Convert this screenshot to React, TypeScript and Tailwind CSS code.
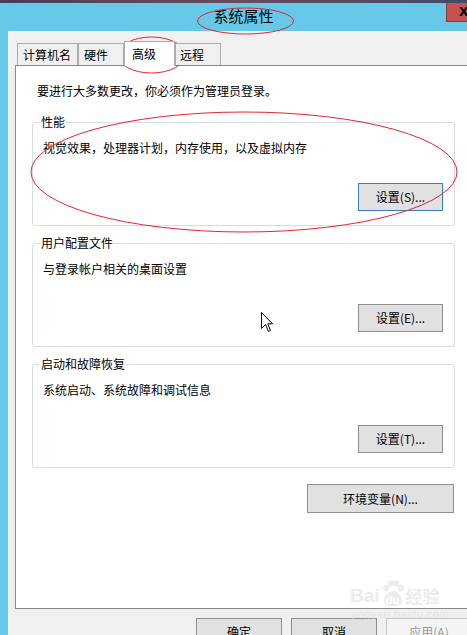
import React from "react";

const Btn: React.FC<{ label: string; focused?: boolean; disabled?: boolean; className?: string }> = ({
  label,
  focused,
  disabled,
  className = "",
}) => (
  <div
    className={`h-[28px] flex items-center justify-center text-[12px] leading-[16px] ${
      disabled
        ? "bg-[#f4f4f4] border border-[#c6c6c6] text-[#9a9a9a]"
        : focused
        ? "bg-[#e1e1e1] border border-[#3c7fb1] text-black"
        : "bg-[#e1e1e1] border border-[#8f8f8f] text-black"
    } ${className}`}
  >
    {label}
  </div>
);

const Group: React.FC<{ title: string; desc: string; button: string; focused?: boolean; className?: string }> = ({
  title,
  desc,
  button,
  focused,
  className = "",
}) => (
  <fieldset className={`ml-[16px] w-[423px] border border-[#d5dde3] rounded-[3px] pb-[14px] ${className}`}>
    <legend className="ml-[7px] px-[1px] text-[12px] leading-[14px] text-black">{title}</legend>
    <div className="mt-[11px] pl-[10px] text-[12px] leading-[16px] text-black">{desc}</div>
    <div className="mt-[27px] flex justify-end pr-[11px]">
      <Btn label={button} focused={focused} className="w-[85px]" />
    </div>
  </fieldset>
);

export default function App() {
  const tabs = [
    { label: "计算机名", w: "w-[61px]", pl: "pl-[5px]" },
    { label: "硬件", w: "w-[46px]", pl: "pl-[5px]" },
    { label: "高级", w: "w-[51px]", pl: "pl-[7px]", active: true },
    { label: "远程", w: "w-[46px]", pl: "pl-[4px]" },
  ];

  return (
    <div className="relative w-[467px] h-[635px] overflow-hidden bg-[#66c9e8] flex flex-col font-['Noto_Sans_CJK_SC','Microsoft_YaHei',sans-serif]">
      {/* desktop strip above the window */}
      <div className="h-[3px] bg-gradient-to-r from-[#4a3c5c] via-[#6b4a5e] to-[#3f4a6a] shrink-0" />

      {/* title bar */}
      <div className="relative h-[28px] shrink-0 flex items-center justify-center pl-[20px]">
        <span className="text-[15px] leading-[20px] text-black -mt-[2px]">系统属性</span>
        <div className="absolute right-0 top-0 w-[21px] h-[19px] bg-[#c75050] border-l border-b border-[#8a3d3d] pl-[12px] flex items-center">
          <span className="font-['Liberation_Sans',sans-serif] font-bold text-[17px] leading-[17px] text-black -mt-[3px]">x</span>
        </div>
      </div>

      {/* window body */}
      <div className="flex-1 flex pl-[8px]">
        <div className="flex-1 bg-[#f0f0f0] pl-[7px] pt-[10px] flex flex-col">
          {/* tabs */}
          <div className="h-[24px] flex items-end pl-[2px] relative z-10">
            {tabs.map((t) =>
              t.active ? (
                <div
                  key={t.label}
                  className={`${t.w} ${t.pl} h-[25px] -mb-[1px] bg-white border border-b-0 border-[#acacac] text-[12px] leading-[16px] pt-[4px] text-black`}
                >
                  {t.label}
                </div>
              ) : (
                <div
                  key={t.label}
                  className={`${t.w} ${t.pl} h-[22px] bg-[#f0f0f0] border border-b-0 border-[#acacac] text-[12px] leading-[16px] pt-[3px] text-black`}
                >
                  {t.label}
                </div>
              )
            )}
          </div>

          {/* tab panel */}
          <div className="h-[544px] w-[470px] shrink-0 bg-white border border-[#898989] flex flex-col">
            <div className="mt-[17px] ml-[21px] text-[12px] leading-[16px] text-black">
              要进行大多数更改，你必须作为管理员登录。
            </div>
            <Group
              className="mt-[16px]"
              title="性能"
              desc="视觉效果，处理器计划，内存使用，以及虚拟内存"
              button="设置(S)..."
              focused
            />
            <Group className="mt-[10px]" title="用户配置文件" desc="与登录帐户相关的桌面设置" button="设置(E)..." />
            <Group className="mt-[10px]" title="启动和故障恢复" desc="系统启动、系统故障和调试信息" button="设置(T)..." />
            <Btn label="环境变量(N)..." className="mt-[16px] ml-[291px] w-[147px] h-[29px]" />
          </div>

          {/* dialog buttons */}
          <div className="mt-[9px] flex pl-[181px] gap-[9px]">
            <Btn label="确定" className="w-[86px]" />
            <Btn label="取消" className="w-[86px]" />
            <Btn label="应用(A)" disabled className="w-[86px]" />
          </div>
        </div>
      </div>

      {/* mouse pointer */}
      <svg className="absolute left-[261px] top-[312px]" width="13" height="22" viewBox="0 0 13 22">
        <path
          d="M0.5 0.5 L0.5 16.5 L4.5 12.5 L7.5 19.5 L9.5 18.5 L6.8 11.8 L11.5 11.8 Z"
          fill="white"
          stroke="black"
          strokeWidth="1"
          strokeLinejoin="miter"
        />
      </svg>

      {/* Baidu watermark */}
      <div className="absolute left-[350px] top-[580px] pointer-events-none flex flex-col items-start opacity-70">
        <div className="flex items-end gap-[1px] font-['Liberation_Sans',sans-serif] font-bold text-[19px] leading-[20px] text-[#e4e4e4]">
          <span>Bai</span>
          <span className="relative w-[24px] h-[26px] flex items-end justify-center">
            <svg className="absolute left-0 top-0" width="24" height="26" viewBox="0 0 24 26">
              <ellipse cx="5" cy="8" rx="3" ry="3.5" fill="#e6e6e6" />
              <ellipse cx="10" cy="3.5" rx="3" ry="3.2" fill="#e6e6e6" />
              <ellipse cx="15.5" cy="3.5" rx="3" ry="3.2" fill="#e6e6e6" />
              <ellipse cx="20" cy="8" rx="3" ry="3.5" fill="#e6e6e6" />
              <path d="M3 22 C3 15 8 11 12 11 C16 11 21 15 21 22 C21 25 18 26 12 26 C6 26 3 25 3 22 Z" fill="#e6e6e6" />
            </svg>
            <span className="relative text-[11px] leading-[12px] text-white">du</span>
          </span>
          <span className="font-['Noto_Sans_CJK_SC',sans-serif] text-[17px] leading-[20px]">经验</span>
        </div>
        <div className="font-['Liberation_Sans',sans-serif] text-[11px] leading-[12px] text-[#e2e2e2] mt-[2px] ml-[2px] tracking-[0.5px]">
          jingyan.baidu.com
        </div>
      </div>

      {/* red annotation ellipses */}
      <svg className="absolute inset-0 pointer-events-none" width="467" height="635" viewBox="0 0 467 635">
        <ellipse cx="245.5" cy="21" rx="48" ry="13" fill="none" stroke="#e3262d" strokeWidth="1" />
        <ellipse cx="151.5" cy="55" rx="33.5" ry="18" fill="none" stroke="#e3262d" strokeWidth="1" />
        <ellipse cx="244" cy="172" rx="213" ry="60" fill="none" stroke="#e3262d" strokeWidth="1" />
      </svg>
    </div>
  );
}
